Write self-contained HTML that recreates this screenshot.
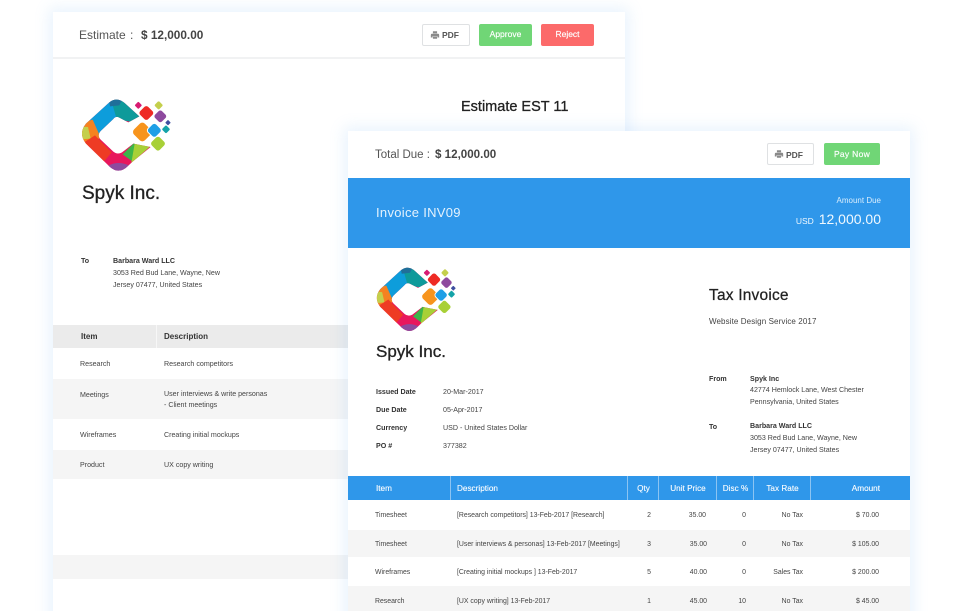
<!DOCTYPE html>
<html><head><meta charset="utf-8">
<style>
html,body{margin:0;padding:0;background:#fff}
#p{position:relative;width:960px;height:611px;overflow:hidden;background:#fff;font-family:"Liberation Sans",sans-serif;color:#333;filter:blur(.25px)}
.card{position:absolute;background:#fff;box-shadow:0 0 14px 4px rgba(120,180,245,.16)}
.b{position:absolute}
.t{position:absolute;white-space:nowrap;line-height:14px;font-size:7.100px;color:#444}
.r{text-align:right}
.c{text-align:center}
.w{color:#fff}
.h{font-weight:bold;color:#333}
.btn{position:absolute;border-radius:2px;text-align:center;font-size:8.500px;color:#fff;-webkit-text-stroke:.15px #fff}
.ws{position:absolute;top:0;width:1px;height:24px;background:#8cc4f2}
.th{font-size:8.200px;top:482px;-webkit-text-stroke:.1px #fff}
.td{font-size:6.900px}
</style></head><body><div id="p">
<svg width="0" height="0" style="position:absolute"><defs>
<clipPath id="ring"><path d="M78 130L148 66Q172 48 196 70L238 108L205 126L178 112Q168 106 160 116L122 152Q110 165 122 178L160 214Q172 224 186 216L220 190L272 200L218 244L205 256Q178 284 150 260L78 190Q54 160 78 130Z"/></clipPath>
<symbol id="logo" viewBox="60 50 290 232">
<g clip-path="url(#ring)">
<rect x="50" y="40" width="240" height="250" fill="#e8175d"/>
<path d="M50 135L150 40L178 112L115 165Z" fill="#0d9ddb"/>
<path d="M148 40H250L240 130L170 116Z" fill="#0e9a9a"/>
<path d="M145 50L190 50L178 75L150 78Z" fill="#1f6f9a"/>
<path d="M50 132L98 118L122 172L80 195L50 175Z" fill="#f58220"/>
<path d="M50 138L84 140L92 175L50 178Z" fill="#c4cf4c"/>
<path d="M66 190L105 165L155 216L128 248Z" fill="#ee3b24"/>
<path d="M145 256Q175 240 208 256L180 290H150Z" fill="#8e4a9e"/>
<path d="M188 222L224 186L232 200L218 244Z" fill="#3db54a"/>
<path d="M214 248L224 190H280Z" fill="#a8d037"/>
</g>
<rect x="-23" y="-23" width="46" height="46" rx="11" transform="translate(247 155) rotate(45)" fill="#f7941d"/>
<rect x="-16" y="-16" width="32" height="32" rx="8" transform="translate(283 150) rotate(45)" fill="#1f9fe6" stroke="#fff" stroke-width="6" paint-order="stroke"/>
<rect x="-17" y="-17" width="34" height="34" rx="8" transform="translate(259 98) rotate(45)" fill="#ee2a24"/>
<rect x="-14.500" y="-14.500" width="29" height="29" rx="7" transform="translate(301 108) rotate(45)" fill="#8e4a9e"/>
<rect x="-9.500" y="-9.500" width="19" height="19" rx="4" transform="translate(296 75) rotate(45)" fill="#c4cf4c"/>
<rect x="-8" y="-8" width="16" height="16" rx="3" transform="translate(235 75) rotate(45)" fill="#d81b72"/>
<rect x="-6" y="-6" width="12" height="12" rx="2" transform="translate(324 127) rotate(45)" fill="#3f4fa0"/>
<rect x="-9" y="-9" width="18" height="18" rx="4" transform="translate(318 147) rotate(45)" fill="#14a3a8"/>
<rect x="-17" y="-17" width="34" height="34" rx="8" transform="translate(294 190) rotate(45)" fill="#a8d037"/>
</symbol>
<symbol id="pr" viewBox="0 0 12 12"><path d="M3.500 4V1.500H8.500V4M2 4.500H10Q11 4.500 11 6V9H9V7.500H3V9H1V6Q1 4.500 2 4.500ZM3.500 8H8.500V10.500H3.500Z" fill="#8a8a8a"/></symbol>
</defs></svg>

<!-- Estimate card -->
<div class="card" style="left:53px;top:12px;width:572px;height:620px"></div>
<div class="b" style="left:53px;top:57px;width:572px;height:2px;background:#f1f2f3"></div>
<div class="t" style="left:79px;top:28px;font-size:12px;color:#555">Estimate</div>
<div class="t" style="left:130px;top:28px;font-size:12px;color:#555">:</div>
<div class="t" style="left:141px;top:28px;font-size:11.800px;color:#444;font-weight:bold">$ 12,000.00</div>
<div class="b" style="left:422px;top:24px;width:46px;height:20px;border:1px solid #dfe1e3;border-radius:2px;background:#fff"></div>
<svg class="b" style="left:430px;top:30px" width="10" height="10"><use href="#pr"/></svg>
<div class="t" style="left:442px;top:28px;font-size:8.500px;font-weight:bold;color:#555">PDF</div>
<div class="btn" style="left:479px;top:24px;width:53px;height:22px;line-height:21px;background:#70d676">Approve</div>
<div class="btn" style="left:541px;top:24px;width:53px;height:22px;line-height:21px;background:#fc6a6a">Reject</div>
<div class="t" style="left:461px;top:100px;font-size:14.500px;color:#222;-webkit-text-stroke:.3px #222">Estimate EST 11</div>
<svg class="b" style="left:80px;top:96.670px" width="96.670" height="77.330"><use href="#logo"/></svg>
<div class="t" style="left:82px;top:187px;font-size:19px;color:#222;-webkit-text-stroke:.3px #222">Spyk Inc.</div>
<div class="t h" style="left:81px;top:254px">To</div>
<div class="t h" style="left:113px;top:254px">Barbara Ward LLC</div>
<div class="t" style="left:113px;top:266px">3053 Red Bud Lane, Wayne, New</div>
<div class="t" style="left:113px;top:278px">Jersey 07477, United States</div>

<div class="b" style="left:53px;top:325px;width:572px;height:23px;background:#ebebeb"></div>
<div class="b" style="left:156px;top:325px;width:1px;height:23px;background:#f7f7f7"></div>
<div class="b" style="left:53px;top:379px;width:572px;height:40px;background:#f5f5f5"></div>
<div class="b" style="left:53px;top:450px;width:572px;height:29px;background:#f5f5f5"></div>
<div class="b" style="left:53px;top:555px;width:572px;height:24px;background:#f5f5f5"></div>
<div class="t h" style="left:81px;top:330px;font-size:8px">Item</div>
<div class="t h" style="left:164px;top:330px;font-size:8px">Description</div>
<div class="t" style="left:80px;top:357px">Research</div>
<div class="t" style="left:164px;top:357px">Research competitors</div>
<div class="t" style="left:80px;top:388px">Meetings</div>
<div class="t" style="left:164px;top:387px">User interviews &amp; write personas</div>
<div class="t" style="left:164px;top:398px">- Client meetings</div>
<div class="t" style="left:80px;top:428px">Wireframes</div>
<div class="t" style="left:164px;top:428px">Creating initial mockups</div>
<div class="t" style="left:80px;top:458px">Product</div>
<div class="t" style="left:164px;top:458px">UX copy writing</div>

<!-- Invoice card -->
<div class="card" style="left:348px;top:131px;width:562px;height:500px"></div>
<div class="t" style="left:375px;top:148px;font-size:11.500px;color:#555">Total Due :</div>
<div class="t" style="left:435px;top:148px;font-size:11.600px;font-weight:bold;color:#444">$ 12,000.00</div>
<div class="b" style="left:767px;top:143px;width:45px;height:20px;border:1px solid #dfe1e3;border-radius:2px;background:#fff"></div>
<svg class="b" style="left:774px;top:149px" width="10" height="10"><use href="#pr"/></svg>
<div class="t" style="left:786px;top:148px;font-size:8.500px;font-weight:bold;color:#555">PDF</div>
<div class="btn" style="left:824px;top:143px;width:56px;height:22px;line-height:22px;background:#70d676;letter-spacing:.3px">Pay Now</div>
<div class="b" style="left:348px;top:178px;width:562px;height:70px;background:#2f97ea"></div>
<div class="t w" style="left:376px;top:206px;font-size:13px;letter-spacing:.3px;color:#e4f2fd">Invoice INV09</div>
<div class="t r" style="right:79px;top:194px;font-size:8px;color:#d9edfc">Amount Due</div>
<div class="t r" style="right:79px;top:212px;font-size:14px;color:#f0f8fe"><span style="font-size:8.500px;margin-right:1px">USD</span> 12,000.00</div>

<svg class="b" style="left:375px;top:265px" width="86" height="69.600" preserveAspectRatio="none"><use href="#logo"/></svg>
<div class="t" style="left:376px;top:345px;font-size:17px;color:#222;-webkit-text-stroke:.3px #222">Spyk Inc.</div>
<div class="t" style="left:709px;top:289px;font-size:15.500px;color:#222;-webkit-text-stroke:.25px #222;letter-spacing:.2px">Tax Invoice</div>
<div class="t" style="left:709px;top:315px;font-size:8px;color:#444;letter-spacing:.1px">Website Design Service 2017</div>

<div class="t h" style="left:376px;top:385px">Issued Date</div><div class="t" style="left:443px;top:385px">20-Mar-2017</div>
<div class="t h" style="left:376px;top:403px">Due Date</div><div class="t" style="left:443px;top:403px">05-Apr-2017</div>
<div class="t h" style="left:376px;top:421px">Currency</div><div class="t" style="left:443px;top:421px">USD - United States Dollar</div>
<div class="t h" style="left:376px;top:439px">PO #</div><div class="t" style="left:443px;top:439px">377382</div>

<div class="t h" style="left:709px;top:372px">From</div>
<div class="t h" style="left:750px;top:372px">Spyk Inc</div>
<div class="t" style="left:750px;top:383px">42774 Hemlock Lane, West Chester</div>
<div class="t" style="left:750px;top:395px">Pennsylvania, United States</div>
<div class="t h" style="left:709px;top:420px">To</div>
<div class="t h" style="left:750px;top:419px">Barbara Ward LLC</div>
<div class="t" style="left:750px;top:431px">3053 Red Bud Lane, Wayne, New</div>
<div class="t" style="left:750px;top:443px">Jersey 07477, United States</div>

<div class="b" style="left:348px;top:476px;width:562px;height:24px;background:#2f97ea">
<div class="ws" style="left:102px"></div><div class="ws" style="left:279px"></div><div class="ws" style="left:310px"></div><div class="ws" style="left:368px"></div><div class="ws" style="left:405px"></div><div class="ws" style="left:462px"></div>
</div>
<div class="b" style="left:348px;top:530px;width:562px;height:27px;background:#f5f5f5"></div>
<div class="b" style="left:348px;top:586px;width:562px;height:25px;background:#f5f5f5"></div>
<div class="t w th" style="left:376px">Item</div>
<div class="t w th" style="left:457px">Description</div>
<div class="t w th c" style="left:628px;width:31px">Qty</div>
<div class="t w th c" style="left:659px;width:58px">Unit Price</div>
<div class="t w th c" style="left:717px;width:37px">Disc %</div>
<div class="t w th c" style="left:754px;width:57px">Tax Rate</div>
<div class="t w th r" style="right:80px">Amount</div>

<div class="t td" style="left:375px;top:509px">Timesheet</div>
<div class="t td" style="left:457px;top:509px">[Research competitors] 13-Feb-2017 [Research]</div>
<div class="t td c" style="left:639px;top:509px;width:20px">2</div>
<div class="t td r" style="right:254px;top:509px">35.00</div>
<div class="t td r" style="right:214px;top:509px">0</div>
<div class="t td r" style="right:157px;top:509px">No Tax</div>
<div class="t td r" style="right:81px;top:509px">$ 70.00</div>

<div class="t td" style="left:375px;top:538px">Timesheet</div>
<div class="t td" style="left:457px;top:538px">[User interviews &amp; personas] 13-Feb-2017 [Meetings]</div>
<div class="t td c" style="left:639px;top:538px;width:20px">3</div>
<div class="t td r" style="right:253px;top:538px">35.00</div>
<div class="t td r" style="right:214px;top:538px">0</div>
<div class="t td r" style="right:157px;top:538px">No Tax</div>
<div class="t td r" style="right:81px;top:538px">$ 105.00</div>

<div class="t td" style="left:375px;top:566px">Wireframes</div>
<div class="t td" style="left:457px;top:566px">[Creating initial mockups ] 13-Feb-2017</div>
<div class="t td c" style="left:639px;top:566px;width:20px">5</div>
<div class="t td r" style="right:253px;top:566px">40.00</div>
<div class="t td r" style="right:214px;top:566px">0</div>
<div class="t td r" style="right:157px;top:566px">Sales Tax</div>
<div class="t td r" style="right:81px;top:566px">$ 200.00</div>

<div class="t td" style="left:375px;top:595px">Research</div>
<div class="t td" style="left:457px;top:595px">[UX copy writing] 13-Feb-2017</div>
<div class="t td c" style="left:639px;top:595px;width:20px">1</div>
<div class="t td r" style="right:253px;top:595px">45.00</div>
<div class="t td r" style="right:214px;top:595px">10</div>
<div class="t td r" style="right:157px;top:595px">No Tax</div>
<div class="t td r" style="right:81px;top:595px">$ 45.00</div>
</div></body></html>
